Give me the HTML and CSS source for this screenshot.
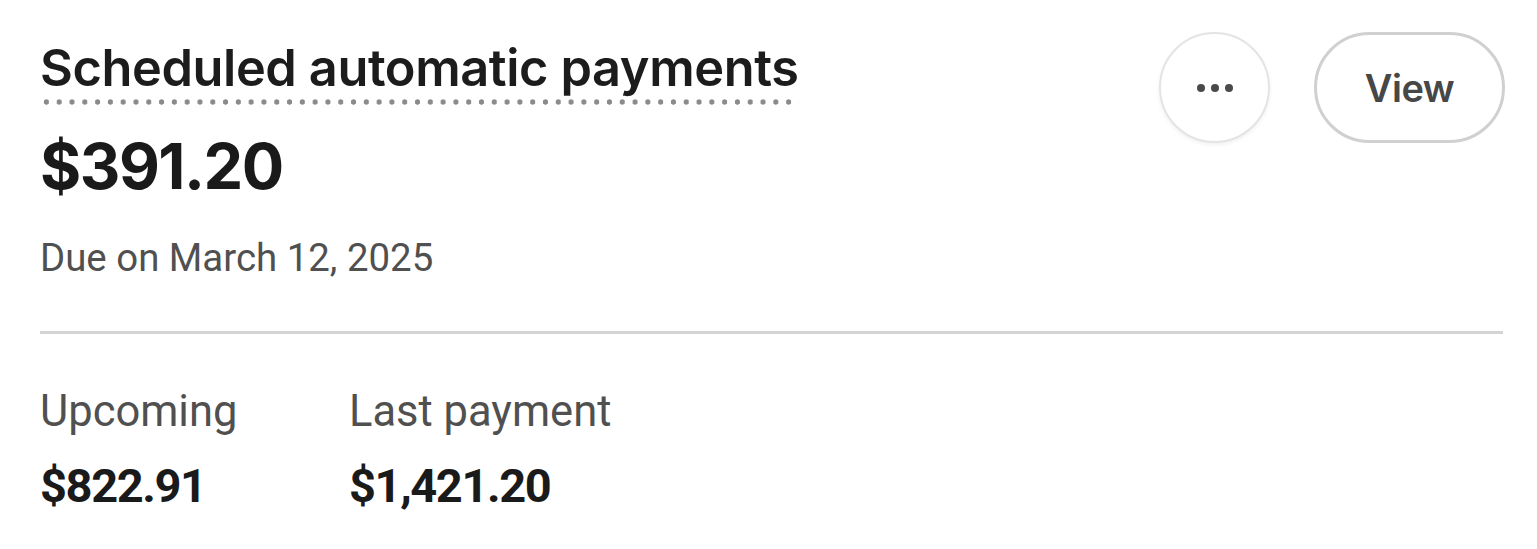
FILE: index.html
```html
<!DOCTYPE html>
<html lang="en">
<head>
<meta charset="utf-8">
<title>Scheduled automatic payments</title>
<link rel="stylesheet" href="styles.css">
</head>
<body>
<section class="card">
  <header class="card-head">
    <div class="head-text">
      <h2 class="title"><span class="title-text">Scheduled automatic payments</span></h2>
      <div class="amount">$391.20</div>
      <div class="due">Due on March 12, 2025</div>
    </div>
    <div class="actions">
      <button class="btn-icon" aria-label="More options">
        <svg width="40" height="12" viewBox="0 0 40 12"><circle cx="6" cy="6" r="4" fill="#4a4a4a"/><circle cx="20" cy="6" r="4" fill="#4a4a4a"/><circle cx="34" cy="6" r="4" fill="#4a4a4a"/></svg>
      </button>
      <button class="btn-pill">View</button>
    </div>
  </header>
  <hr class="divider">
  <div class="stats">
    <div class="stat">
      <div class="stat-label">Upcoming</div>
      <div class="stat-value">$822.91</div>
    </div>
    <div class="stat">
      <div class="stat-label">Last payment</div>
      <div class="stat-value">$1,421.20</div>
    </div>
  </div>
</section>
</body>
</html>
```
FILE: styles.css
```css
html, body {
  margin: 0;
  padding: 0;
  background: #ffffff;
}

.card {
  box-sizing: border-box;
  width: 1537px;
  height: 549px;
  padding: 32px 32px 0 40px;
  background: #fff;
  font-family: Inter, "Liberation Sans", sans-serif;
  color: #1c1c1c;
}

.card-head {
  display: flex;
  justify-content: space-between;
  align-items: flex-start;
}

.title {
  margin: 0;
  padding-top: 8px;
  font-size: 50.5px;
  font-weight: 600;
  line-height: 56px;
  letter-spacing: -0.4px;
}

.title-text {
  display: inline-block;
  padding-bottom: 9px;
  background-image: radial-gradient(circle, #8a8a8a 2.4px, transparent 2.9px);
  background-size: 12.8px 6px;
  background-position: 0 100%;
  background-repeat: repeat-x;
}

.amount {
  margin-top: 25px;
  font-size: 63px;
  font-weight: 700;
  line-height: 72px;
  letter-spacing: -1.5px;
  color: #1a1a1a;
}

.due {
  margin-top: 33px;
  font-family: Roboto, "Liberation Sans", sans-serif;
  font-size: 38.4px;
  line-height: 46px;
  color: #505050;
}

.actions {
  display: flex;
  gap: 44px;
}

.btn-icon,
.btn-pill {
  box-sizing: border-box;
  height: 111px;
  background: #fff;
  border-radius: 56px;
  font-family: Inter, "Liberation Sans", sans-serif;
  cursor: pointer;
  display: flex;
  align-items: center;
  justify-content: center;
  padding: 0;
}

.btn-icon {
  width: 111px;
  border: 2px solid #e4e4e4;
  box-shadow: 0 2px 4px rgba(0, 0, 0, 0.06);
}

.btn-pill {
  width: 191px;
  border: 3px solid #d0d0d0;
  font-size: 38px;
  font-weight: 600;
  color: #474747;
  letter-spacing: -0.5px;
}

.divider {
  margin: 50px 0 0 0;
  border: 0;
  height: 3px;
  width: 1463px;
  background: #d4d4d4;
}

.stats {
  display: flex;
  margin-top: 51px;
}

.stat {
  display: flex;
  flex-direction: column;
}

.stat:first-child {
  width: 309px;
}

.stat-label {
  font-family: Roboto, "Liberation Sans", sans-serif;
  font-size: 43.5px;
  line-height: 54px;
  color: #505050;
}

.stat-value {
  margin-top: 21px;
  font-family: Roboto, "Liberation Sans", sans-serif;
  font-size: 47px;
  font-weight: 700;
  line-height: 52px;
  letter-spacing: -1.4px;
  color: #1a1a1a;
}
```
